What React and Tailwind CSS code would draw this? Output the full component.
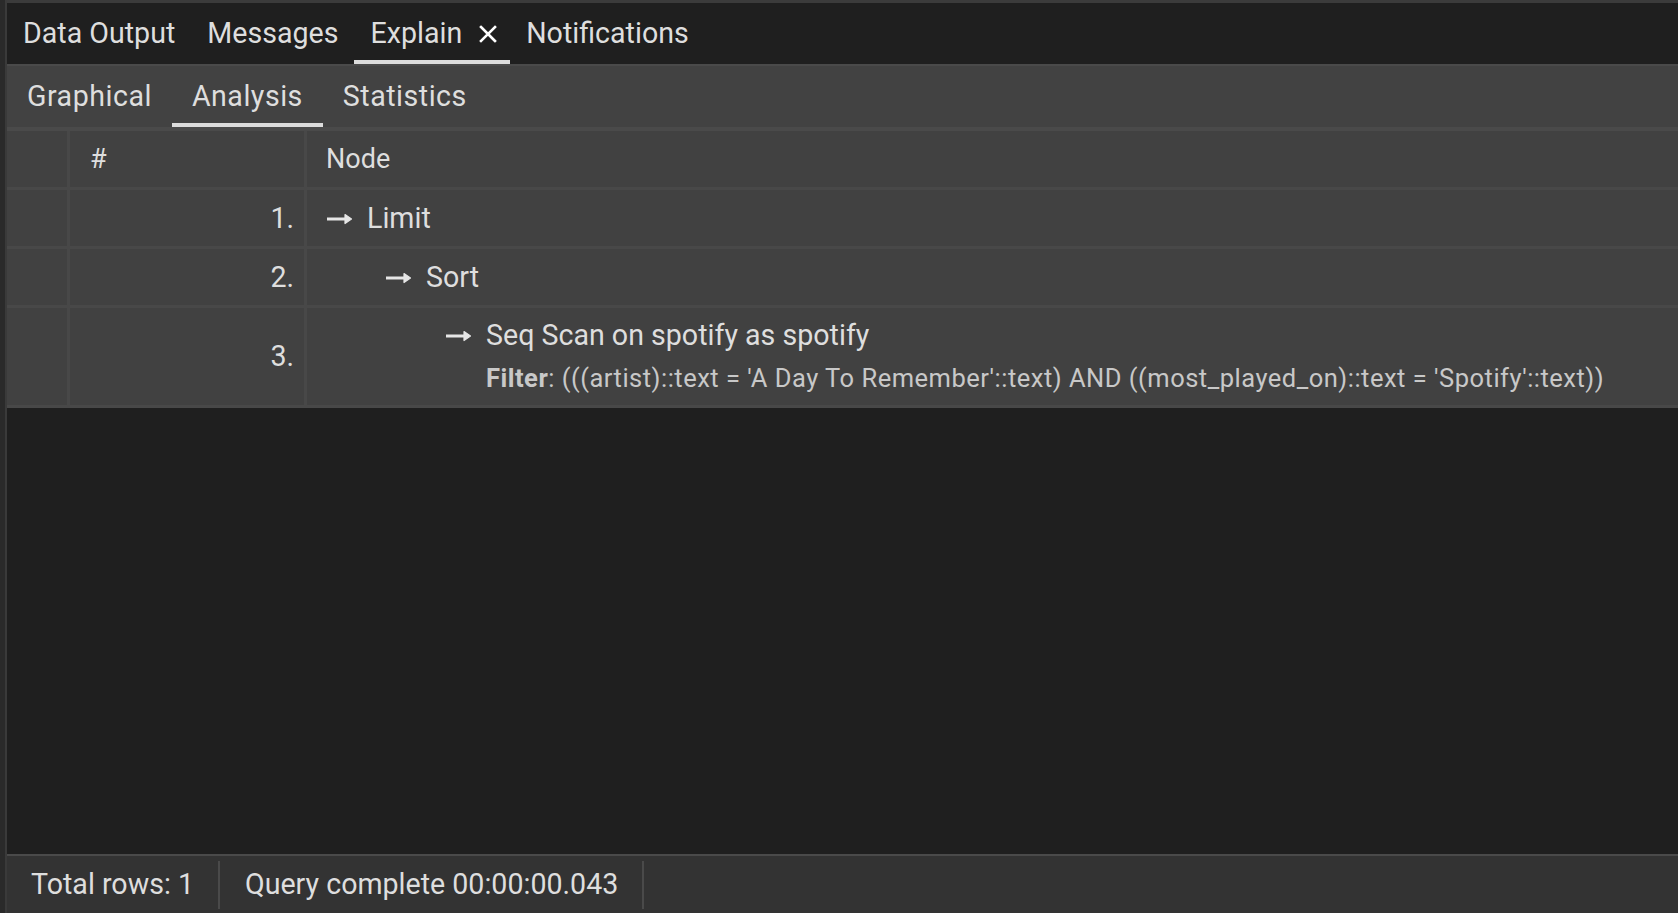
import React from "react";

const font = { fontFamily: "Roboto, 'Liberation Sans', sans-serif" };

function Arrow() {
  return (
    <svg className="mr-[14px] shrink-0 mt-[2px]" width="27" height="12" viewBox="0 0 27 12" fill="none">
      <path d="M1 6 H24" stroke="#e6e6e6" strokeWidth="3" />
      <path d="M19 1.5 L25.5 6 L19 10.5 Z" fill="#e6e6e6" stroke="#e6e6e6" strokeWidth="1.2" strokeLinejoin="round" />
    </svg>
  );
}

export default function App() {
  return (
    <div style={font} className="w-[1678px] h-[913px] bg-[#2a2a2a] flex overflow-hidden text-[#dedede]">
      <div className="w-[5px] shrink-0 bg-[#2a2a2a]" />
      <div className="w-[2px] shrink-0 bg-[#3a3a3a]" />
      <div className="flex-1 flex flex-col min-w-0">
        <div className="h-[3px] bg-[#3b3b3b]" />
        {/* main tabs */}
        <div className="h-[61px] bg-[#1f1f1f] flex items-stretch text-[28.6px]">
          <div className="px-[16px] flex items-center">Data Output</div>
          <div className="px-[16px] flex items-center">Messages</div>
          <div className="pl-[16px] pr-[12px] flex items-center border-b-[4px] border-[#dcdcdc] pt-[4px]">
            Explain
            <svg className="ml-[16px]" width="20" height="20" viewBox="0 0 20 20" stroke="#ffffff" strokeWidth="2.6" strokeLinecap="square">
              <path d="M3 3 L17 17 M17 3 L3 17" />
            </svg>
          </div>
          <div className="px-[16px] flex items-center">Notifications</div>
        </div>
        {/* sub tabs */}
        <div className="h-[2px] bg-[#4a4a4a]" />
        <div className="h-[61px] bg-[#424242] flex items-stretch text-[28.6px] tracking-[0.5px]">
          <div className="px-[20px] flex items-center">Graphical</div>
          <div className="px-[20px] flex items-center border-b-[4px] border-[#dcdcdc] pt-[4px]">Analysis</div>
          <div className="px-[20px] flex items-center">Statistics</div>
        </div>
        <div className="h-[4px] bg-[#4a4a4a]" />
        {/* table */}
        <div className="bg-[#484848] grid grid-cols-[60px_234px_1fr] gap-[3px] pb-[3px] text-[28.6px]">
          <div className="bg-[#414141] h-[56px]" />
          <div className="bg-[#414141] h-[56px] flex items-center pl-[20px] text-[27px]">#</div>
          <div className="bg-[#414141] h-[56px] flex items-center pl-[19px] text-[27px]">Node</div>

          <div className="bg-[#414141] h-[56px]" />
          <div className="bg-[#414141] h-[56px] flex items-center justify-end pr-[10px]">1.</div>
          <div className="bg-[#414141] h-[56px] flex items-center pl-[19px]"><Arrow />Limit</div>

          <div className="bg-[#414141] h-[56px]" />
          <div className="bg-[#414141] h-[56px] flex items-center justify-end pr-[10px]">2.</div>
          <div className="bg-[#414141] h-[56px] flex items-center pl-[78px]"><Arrow />Sort</div>

          <div className="bg-[#414141] h-[97px]" />
          <div className="bg-[#414141] h-[97px] flex items-center justify-end pr-[10px]">3.</div>
          <div className="bg-[#414141] h-[97px] flex flex-col justify-center pl-[138px]">
            <div className="leading-[43px] flex items-center"><Arrow />Seq Scan on spotify as spotify</div>
            <div className="pl-[41px] text-[25.5px] tracking-[0.5px] text-[#c8c8c8] leading-[43px] whitespace-nowrap">
              <span className="font-bold">Filter</span>: (((artist)::text = 'A Day To Remember'::text) AND ((most_played_on)::text = 'Spotify'::text))
            </div>
          </div>
        </div>
        <div className="flex-1 bg-[#1f1f1f]" />
        <div className="h-[2px] bg-[#4a4a4a]" />
        <div className="h-[57px] bg-[#333333] flex items-center text-[28.6px]">
          <div className="px-[24px] h-[48px] flex items-center border-r-[2px] border-[#4a4a4a]">Total rows: 1</div>
          <div className="pl-[25px] pr-[24px] h-[48px] flex items-center border-r-[2px] border-[#4a4a4a]">Query complete 00:00:00.043</div>
        </div>
      </div>
    </div>
  );
}
